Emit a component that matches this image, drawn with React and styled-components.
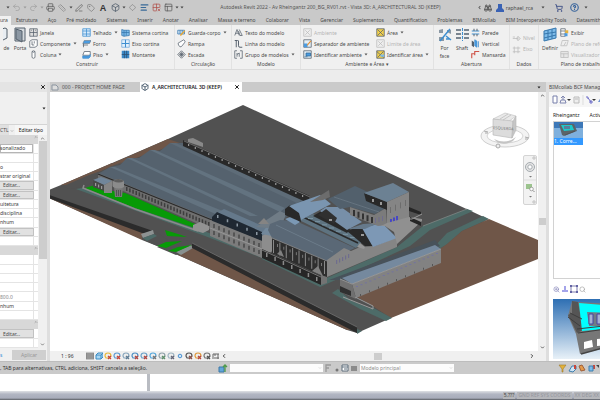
import React from 'react';
import styled, { createGlobalStyle } from 'styled-components';
import {
  Undo2,
  Redo2,
  Printer,
  Ruler,
  PenLine,
  Tag,
  Box,
  Diamond,
  AlignLeft,
  Grid2x2X,
  PanelsTopLeft,
  Binoculars,
  ShoppingCart,
  CircleHelp,
  ChevronDown,
  ChevronUp,
  ChevronLeft,
  ChevronRight,
  X,
  ZoomIn,
  Search
} from 'lucide-react';

const GlobalStyle = createGlobalStyle`
  * {
    box-sizing: border-box;
  }

  body {
    margin: 0;
    background: #ececec;
    color: #4a4a4a;
    font: 5px/8px "Noto Sans", "Open Sans", sans-serif;
    overflow: hidden;
  }

  button, select, input {
    font: inherit;
    color: inherit;
    margin: 0;
    padding: 0;
    border: 0;
    border-radius: 0;
    background: none;
    appearance: none;
  }

  svg {
    display: block;
    flex: none;
  }
`;

const Shell = styled.div`
  min-height: 100vh;
  display: flex;
  flex-direction: column;
`;

/* title bar and ribbon */

const TitleBar = styled.header`
  display: flex;
  align-items: center;
  height: 16px;
  padding: 0 12px 2px 5px;
  background: #c9c9c9;
`;

const TitleTools = styled.div`
  display: flex;
  align-items: center;
  white-space: nowrap;
  padding-top: 1px;
`;

const ToolButton = styled.button`
  display: flex;
  align-items: center;
  justify-content: center;
  width: ${props => props.$width || 12}px;
  height: 12px;
  color: ${props => props.$color || '#5a5a5a'};
`;

const Letter = styled.b`
  font: bold 9px/10px "Liberation Sans", sans-serif;
  color: #333;
`;

const Title = styled.h1`
  flex: 1;
  min-width: 0;
  margin: 0;
  font-size: 5px;
  font-weight: 400;
  text-align: center;
  white-space: nowrap;
  color: #555;
`;

const Tabs = styled.nav`
  display: flex;
  height: 9px;
  background: #c9c9c9;
  overflow: hidden;
`;

const RibbonTab = styled.button`
  flex: none;
  height: 9px;
  padding: ${props => (props.$active ? '0 3px 0 0' : '0 5px')};
  background: ${props => (props.$active ? '#f0f0f0' : 'none')};
  white-space: nowrap;
  line-height: 9px;
`;

const Ribbon = styled.div`
  display: flex;
  height: 45px;
  background: #f0f0f0;
  border-bottom: 1px solid #dcdcdc;
  overflow: hidden;
`;

const RibbonPanel = styled.section`
  flex: none;
  width: ${props => props.$width}px;
  display: flex;
  flex-direction: column;
  border-right: 1px solid #e2e2e2;
`;

const PanelTools = styled.div`
  display: flex;
  padding-left: ${props => props.$inset || 2}px;
  height: 35px;
`;

const PanelName = styled.div`
  text-align: center;
  white-space: nowrap;
  line-height: 9px;
`;

const ToolColumn = styled.div`
  flex: none;
  width: ${props => props.$width}px;
  display: flex;
  flex-direction: column;
  justify-content: ${props => (props.$centered ? 'center' : 'flex-start')};
  padding-top: 2px;
`;

const RibbonItem = styled.button`
  display: flex;
  align-items: center;
  gap: 2px;
  height: 11px;
  white-space: nowrap;
  color: ${props => (props.disabled ? '#b4b4b4' : '#4a4a4a')};
`;

const BigItem = styled.button`
  flex: none;
  width: ${props => props.$width}px;
  display: flex;
  flex-direction: column;
  align-items: center;
  gap: 1px;
  padding-top: 2px;
  line-height: 8px;
`;

const RibbonFoot = styled.div`
  height: 12px;
  background: #ececec;
`;

/* workspace */

const Workspace = styled.main`
  flex: 1;
  display: grid;
  grid-template-columns: 47px 1fr 51px;
  column-gap: 3px;
  background: #dedede;
  min-height: 279px;
`;

const Palette = styled.aside`
  display: flex;
  flex-direction: column;
  background: #f0f0f0;
  overflow: hidden;
  min-width: 0;
`;

const PaletteHead = styled.div`
  display: flex;
  align-items: center;
  justify-content: flex-end;
  height: 10px;
  padding-right: 1px;
  background: #e4e4e4;
`;

const TypePicker = styled.div`
  display: flex;
  align-items: center;
  justify-content: flex-end;
  height: 33px;
  border-bottom: 1px solid #d4d4d4;
`;

const TypeRow = styled.div`
  display: flex;
  height: 10px;
  white-space: nowrap;
`;

const TypeSelect = styled.select`
  width: 9px;
  background: #e0e0e0;
`;

const EditType = styled.button`
  flex: 1;
  background: #f6f6f6;
  white-space: nowrap;
  color: #222;
`;

const PropsBody = styled.div`
  flex: 1;
  display: grid;
  grid-template-columns: 1fr 9px;
`;

const PropList = styled.div`
  display: grid;
  grid-auto-rows: 1fr;
  background: #fff;
`;

const Section = styled.div`
  display: flex;
  justify-content: flex-end;
  background: #d8d8d8;
`;

const PropRow = styled.div`
  display: flex;
  border-bottom: 1px solid #e4e4e4;
  padding-right: 4px;
  white-space: nowrap;
  overflow: hidden;
`;

const PropValue = styled.input`
  width: 100%;
  min-width: 0;
  color: ${props => (props.$muted ? '#888' : '#3a3a3a')};
  border-right: 1px solid #e4e4e4;
  box-shadow: ${props => (props.$boxed ? 'inset 0 0 0 1px #b5b5b5' : 'none')};
`;

const EditButton = styled.button`
  width: 100%;
  background: #e1e1e1;
  border: 1px solid #c2c2c2;
  border-left: 0;
  line-height: 6px;
  padding-right: 10px;
`;

const ScrollTrack = styled.div`
  display: flex;
  flex-direction: column;
  justify-content: space-between;
  align-items: center;
  background: #f0f0f0;
  padding: 1px 0;
`;

const Thumb = styled.span`
  display: block;
  width: ${props => props.$width}px;
  height: ${props => props.$height}px;
  background: #cdcdcd;
`;

const PaletteFoot = styled.div`
  display: flex;
  align-items: center;
  justify-content: space-between;
  height: 13px;
  padding-right: 1px;

  a {
    color: #3a8ed8;
    text-decoration: none;
  }
`;

const ApplyButton = styled.button`
  width: 34px;
  height: 10px;
  background: #cfcfcf;
  color: #969696;
`;

const View = styled.section`
  display: flex;
  flex-direction: column;
  min-width: 0;
  background: #fff;
`;

const ViewTabs = styled.div`
  display: flex;
  height: 10px;
  background: #cacaca;
  padding-right: 5px;
  align-items: center;
`;

const ViewTab = styled.button`
  display: flex;
  align-items: center;
  gap: 3px;
  height: 10px;
  width: ${props => props.$width}px;
  padding: 0 2px 0 1px;
  white-space: nowrap;
  background: ${props => (props.$active ? '#fff' : '#cacaca')};
  color: ${props => (props.$active ? '#222' : '#555')};
  font-weight: ${props => (props.$active ? 600 : 400)};

  span {
    flex: 1;
    text-align: left;
  }
`;

const Spacer = styled.span`
  flex: 1;
`;

const CanvasRow = styled.div`
  flex: 1;
  display: grid;
  grid-template-columns: 1fr 8px;
`;

const Canvas = styled.div`
  position: relative;
  overflow: hidden;

  > svg {
    width: 100%;
    height: 100%;
  }
`;

const ViewCube = styled.div`
  position: absolute;
  top: 20px;
  right: 8px;
`;

const NavBar = styled.div`
  position: absolute;
  top: 63px;
  right: 1px;
  width: 14px;
  height: 50px;
  border: 1px solid #d4d4d4;
  border-radius: 2px;
  background: #f2f2f2;
`;

const ViewBar = styled.div`
  display: flex;
  align-items: center;
  height: 10px;
  padding: 0 11px;
  background: #f0f0f0;
`;

const Scale = styled.span`
  width: 25px;
  color: #333;
`;

const ViewIcons = styled.div`
  display: flex;
  gap: 1px;
  align-items: center;
`;

const BcfPanel = styled.aside`
  display: flex;
  flex-direction: column;
  min-width: 0;
  overflow: hidden;
  background: #fff;
  white-space: nowrap;
`;

const BcfTitle = styled.div`
  height: 10px;
  line-height: 10px;
  background: #dcdcdc;
`;

const BcfTools = styled.div`
  display: flex;
  align-items: center;
  gap: 2px;
  height: 15px;
  padding-left: 3px;
  background: #f6f6f6;
`;

const BcfTabs = styled.div`
  display: flex;
  gap: 10px;
  height: 14px;
  padding: 4px 4px;
  color: #222;
`;

const IssueList = styled.div`
  flex: 1;
  margin-left: 4px;
  border: 1px solid #d2d2d2;
  border-right: 0;
`;

const Issue = styled.button`
  display: block;
  width: 29px;
  background: #3399ff;
  color: #fff;
  text-align: left;
  line-height: 7px;
`;

const SnapTools = styled.div`
  display: flex;
  align-items: center;
  gap: 1px;
  height: 20px;
  padding-left: 4px;
`;

const Preview = styled.div`
  height: 60px;
  margin: 0 0 2px 4px;
  overflow: hidden;
`;

/* bottom */

const StatusBar = styled.footer`
  display: flex;
  align-items: center;
  height: 13px;
  background: #cacaca;
  border-top: 1px solid #bdbdbd;
  padding-right: 1px;
  white-space: nowrap;
`;

const StatusText = styled.span`
  width: 218px;
  color: #333;
`;

const SelectWrap = styled.label`
  display: flex;
  align-items: center;
  height: 8px;
  width: ${props => props.$width}px;
  padding: 0 1px;
  margin: 0 2px;
  background: #fcfcfc;
  color: #aaa;

  select {
    flex: 1;
    min-width: 0;
    color: #8c8c8c;
  }
`;

const Tray = styled.div`
  display: grid;
  grid-template-columns: 150px 1fr;
  height: 17px;
  background: #fff;

  span {
    border-right: 3px solid #b9bcc2;
  }

  span + span {
    border-right: 0;
  }
`;

const HostBar = styled.div`
  display: flex;
  justify-content: flex-end;
  gap: 2px;
  height: 9px;
  overflow: hidden;
  white-space: nowrap;
  line-height: 7px;
  padding-top: 1px;
  background: linear-gradient(#dfe1e5, #b1b5c2 35%, #a8acba 80%, #6e7179 90%);
  color: #93959d;

  span {
    background: #b5b6ba;
    height: 7px;
    padding: 0 1px;
  }

  span:first-child {
    color: #444;
  }
`;

const Arrow = ({ color = '#444' }) => (
  <svg width="4" height="3" viewBox="0 0 4 3">
    <path d="M0.5 0.5h3L2 2.5z" fill={color} />
  </svg>
);

const blue = '#3f8fd0';
const dark = '#55606c';

// 12x12 drawings used by the small ribbon buttons
const glyphs = {
  window: <path d="M1 1h10v10H1zM6 1v10M1 6h10M3 3h1M8 3h1" fill="#ddd" stroke={dark} />,
  component: <path d="M1 3l3-2h7v8l-3 2H1zM4 3v5h3M7 3v3" fill="#fff" stroke={dark} />,
  column: <path d="M4 2q2-2 4 0v8q-2 2-4 0zM4 2q2 2 4 0" fill="#fff" stroke={dark} />,
  roof: (
    <g>
      <path d="M1 1h10v10H1z" fill="#d8ebfa" stroke={blue} />
      <path d="M6 1v10M1 4h10M1 8h10" stroke={blue} />
    </g>
  ),
  ceiling: (
    <g>
      <path d="M3 2h9l-2 4H1z" fill="#4a9be0" stroke={dark} strokeWidth=".6" />
      <path d="M2 6v5M1 8h7" stroke={dark} />
    </g>
  ),
  floor: (
    <g>
      <path d="M3 2h8v5H1z" fill="#fff" stroke={dark} />
      <path d="M1 8h8l2-2v3L9 11H1z" fill="#4a9be0" stroke={blue} />
    </g>
  ),
  curtain: (
    <g>
      <path d="M1 2l3 1h7v7l-7 1-3-1z" fill="#7dbbe9" stroke="#3677ad" />
      <path d="M4 3v8M7 3v7M1 6h10" stroke="#3677ad" />
    </g>
  ),
  axis: (
    <g>
      <path d="M1 1h10v10H1z" fill="#e4f1fc" stroke="#6da6d8" />
      <path d="M6 1v10M1 6h10" stroke={blue} strokeWidth="1.4" />
    </g>
  ),
  mullion: (
    <g>
      <path d="M1 1h10v10H1z" fill="#3c8ac9" />
      <path d="M4.500 1v10M7.500 1v10M1 6h10" stroke="#2c4f70" />
    </g>
  ),
  rail: (
    <g>
      <path d="M1 3h9v5H1zM4 3v5M7 3v5" fill="#cfe4f5" stroke="#3677ad" />
      <path d="M4 9l6-6 1 1-6 7z" fill="#e6a532" />
    </g>
  ),
  ramp: <path d="M2 8q-2-3 2-4l5-3q3 2 1 4l-4 5q-2 2-4-2z" fill="#fff" stroke={dark} />,
  stair: <path d="M1 6l5-5 5 5-5 5zM3 6h6M6 3v6M4 4l4 4M8 4l-4 4" fill="#ddd" stroke={dark} />,
  text: <path d="M1 10l3-8 3 8M2 7h4M7 2l4 8H8M6 4l2 6" fill="none" stroke={dark} />,
  line: <path d="M1 2h4M3 2v9M6 2v7q0 2 2 2h3" fill="none" stroke={dark} strokeWidth="1.300" />,
  group: <path d="M4 1H1v10h3M8 1h3v10H8M4 4v5M4 6l3-2v5" fill="none" stroke={dark} />,
  room: <path d="M1 1h10v10H1zM3 3l6 6M9 3l-6 6" fill="#eee" stroke="#bbb" />,
  separator: (
    <g>
      <path d="M1 1h10v10H1z" fill="#e3eef6" stroke={dark} />
      <path d="M1 6h5v5H1z" fill="#4a9be0" />
      <path d="M5 8l5-6 1 1-5 6z" fill="#e58b2a" />
    </g>
  ),
  tagroom: (
    <g>
      <path d="M1 1h10v10H1z" fill="#e3eef6" stroke={dark} />
      <path d="M4 4h6v4H4zM2 9h4" fill="#4a9be0" stroke="#2f6594" />
    </g>
  ),
  area: (
    <g>
      <path d="M1 1h10v10H1z" fill="#f1cf4c" stroke={dark} />
      <path d="M2 2l8 8M10 2l-8 8" stroke={dark} />
    </g>
  ),
  areatag: (
    <g>
      <path d="M1 1h10v10H1z" fill="#f1cf4c" stroke={dark} />
      <path d="M1 2l9 8M10 2l-8 8" stroke={dark} />
      <path d="M6 6h5v3H6z" fill="#7dbbe9" />
    </g>
  ),
  wall: (
    <g>
      <path d="M1 4h10M1 8h10" stroke={blue} strokeWidth="1.500" />
      <path d="M4 1v3M8 1v3M4 8v3M8 8v3" stroke={dark} strokeWidth="1.300" />
    </g>
  ),
  vertical: (
    <g>
      <path d="M1 2v7l3 2V4z" fill={dark} />
      <path d="M5 1v8l3 2V3zM10 3v8" fill="#4a9be0" stroke={blue} />
    </g>
  ),
  dormer: <path d="M1 11V5h4V2h6M5 5v2" fill="none" stroke="#cf5348" strokeWidth="1.500" />,
  level: <path d="M1 6h7M8 3l3 3-3 3-2-3zM1 4h3" fill="#ddd" stroke="#bbb" />,
  grid: <path d="M3 2v9M8 2v9M1 4h10M1 9h10" fill="none" stroke="#bbb" />,
  show: (
    <g>
      <path d="M1 1h6v10H1zM1 4h6M1 8h6" fill="#fff" stroke={dark} />
      <path d="M7 3h4v4H7z" fill="#e6b33c" />
      <path d="M6 7h4v4H6z" fill="#4a9be0" />
    </g>
  ),
  plane: <path d="M3 2h8l-2 7H1zM5 9l3-5" fill="#eee" stroke="#bbb" />,
  viewer: <path d="M1 2h10v8H1zM1 5h10M5 5v5" fill="#e6e6e6" stroke="#bbb" />
};

const Glyph = ({ name, size = 9 }) => (
  <svg width={size} height={size} viewBox="0 0 12 12">
    {glyphs[name]}
  </svg>
);

const Item = ({ icon, text, menu, disabled }) => (
  <RibbonItem disabled={disabled}>
    <Glyph name={icon} />
    <span>{text}</span>
    {menu && <Arrow color={disabled ? '#bbb' : '#555'} />}
  </RibbonItem>
);

const ribbonTabs = [
  'Estrutura',
  'Aço',
  'Pré moldado',
  'Sistemas',
  'Inserir',
  'Anotar',
  'Analisar',
  'Massa e terreno',
  'Colaborar',
  'Vista',
  'Gerenciar',
  'Suplementos',
  'Quantification',
  'Problemas',
  'BIMcollab',
  'BIM Interoperability Tools',
  'Datasmith'
];

const RibbonArea = () => (
  <Ribbon>
    <RibbonPanel $width={175}>
      <PanelTools $inset={0}>
        <BigItem $width={9}>
          <svg width="8" height="16" viewBox="0 0 8 16">
            <path d="M-4 3l6-2 2 1v9l-6 3z" fill="#e8edf2" stroke={dark} />
          </svg>
          de
        </BigItem>
        <BigItem $width={18}>
          <svg width="12" height="16" viewBox="0 0 12 16">
            <path d="M1 1h10v13H1z" fill="#d5dade" stroke={dark} />
            <path d="M2 2l6 2v11l-6-3z" fill="#8c98a4" stroke={dark} />
          </svg>
          Porta
        </BigItem>
        <ToolColumn $width={53}>
          <Item icon="window" text="Janela" />
          <Item icon="component" text="Componente" menu />
          <Item icon="column" text="Coluna" menu />
        </ToolColumn>
        <ToolColumn $width={39}>
          <Item icon="roof" text="Telhado" menu />
          <Item icon="ceiling" text="Forro" />
          <Item icon="floor" text="Piso" menu />
        </ToolColumn>
        <ToolColumn $width={50}>
          <Item icon="curtain" text="Sistema cortina" />
          <Item icon="axis" text="Eixo cortina" />
          <Item icon="mullion" text="Montante" />
        </ToolColumn>
      </PanelTools>
      <PanelName>Construir</PanelName>
    </RibbonPanel>
    <RibbonPanel $width={57}>
      <PanelTools>
        <ToolColumn $width={54}>
          <Item icon="rail" text="Guarda-corpo" menu />
          <Item icon="ramp" text="Rampa" />
          <Item icon="stair" text="Escada" />
        </ToolColumn>
      </PanelTools>
      <PanelName>Circulação</PanelName>
    </RibbonPanel>
    <RibbonPanel $width={69}>
      <PanelTools>
        <ToolColumn $width={66}>
          <Item icon="text" text="Texto do modelo" />
          <Item icon="line" text="Linha do modelo" />
          <Item icon="group" text="Grupo de modelos" menu />
        </ToolColumn>
      </PanelTools>
      <PanelName>Modelo</PanelName>
    </RibbonPanel>
    <RibbonPanel $width={133}>
      <PanelTools>
        <ToolColumn $width={73}>
          <Item icon="room" text="Ambiente" disabled />
          <Item icon="separator" text="Separador de ambiente" />
          <Item icon="tagroom" text="Identificar ambiente" menu />
        </ToolColumn>
        <ToolColumn $width={57}>
          <Item icon="area" text="Área" menu />
          <Item icon="room" text="Limite de área" disabled />
          <Item icon="areatag" text="Identificar área" menu />
        </ToolColumn>
      </PanelTools>
      <PanelName>Ambiente e Área ▾</PanelName>
    </RibbonPanel>
    <RibbonPanel $width={76}>
      <PanelTools>
        <BigItem $width={17}>
          <svg width="14" height="16" viewBox="0 0 14 16">
            <path d="M1 3l4-1v4H1zM9 3h4v4l-4-2zM1 10h5v4H1z" fill="#8b98a4" />
            <path d="M2 14L12 2M8 9l5 4M8 12h4" stroke={blue} strokeWidth="1.500" />
          </svg>
          Por face
        </BigItem>
        <BigItem $width={18}>
          <svg width="15" height="16" viewBox="0 0 15 16">
            <path d="M1 3h5M9 3h5M1 7h5M9 7h5M1 11h5M9 11h5" stroke="#7a8590" strokeWidth="2" />
            <path d="M7.500 1v13" stroke={blue} strokeDasharray="3 1" />
          </svg>
          Shaft
        </BigItem>
        <ToolColumn $width={38}>
          <Item icon="wall" text="Parede" />
          <Item icon="vertical" text="Vertical" />
          <Item icon="dormer" text="Mansarda" />
        </ToolColumn>
      </PanelTools>
      <PanelName>Abertura</PanelName>
    </RibbonPanel>
    <RibbonPanel $width={29}>
      <PanelTools>
        <ToolColumn $width={26} $centered>
          <Item icon="level" text="Nível" disabled />
          <Item icon="grid" text="Eixo" disabled />
        </ToolColumn>
      </PanelTools>
      <PanelName>Dados</PanelName>
    </RibbonPanel>
    <RibbonPanel $width={86}>
      <PanelTools $inset={1}>
        <BigItem $width={20}>
          <svg width="14" height="16" viewBox="0 0 14 16">
            <path d="M1 4l12-3v10L1 14z" fill="#7dbbe9" stroke="#3677ad" />
            <path d="M5 3v10M9 2v10M1 7l12-2M1 11l12-3" stroke="#3677ad" />
          </svg>
          Definir
        </BigItem>
        <ToolColumn $width={62}>
          <Item icon="show" text="Exibir" />
          <Item icon="plane" text="Plano de referência" disabled />
          <Item icon="viewer" text="Visualizador" disabled />
        </ToolColumn>
      </PanelTools>
      <PanelName>Plano de trabalho</PanelName>
    </RibbonPanel>
  </Ribbon>
);

const propRows = [
  { type: 'section' },
  { type: 'value', text: 'sonalizado', boxed: true },
  { type: 'value', text: '' },
  { type: 'value', text: 'o' },
  { type: 'value', text: 'strar original' },
  { type: 'edit' },
  { type: 'edit' },
  { type: 'value', text: 'uitetura' },
  { type: 'value', text: 'disciplina' },
  { type: 'value', text: 'nhum' },
  { type: 'edit' },
  { type: 'value', text: '' },
  { type: 'section' },
  { type: 'value', text: '' },
  { type: 'value', text: '' },
  { type: 'value', text: '' },
  { type: 'value', text: '' },
  { type: 'value', text: '800.0', muted: true },
  { type: 'value', text: 'nhum' },
  { type: 'value', text: '' },
  { type: 'section' },
  { type: 'edit' },
  { type: 'value', text: '' }
];

const Properties = () => (
  <Palette>
    <PaletteHead>
      <ToolButton $width={7} $color="#222" aria-label="Fechar">
        <X size={6} strokeWidth={4} />
      </ToolButton>
    </PaletteHead>
    <TypePicker>
      <ToolButton $width={7} aria-label="Tipo">
        <Arrow color="#222" />
      </ToolButton>
    </TypePicker>
    <TypeRow>
      <TypeSelect aria-label="Vista">
        <option>CTL</option>
      </TypeSelect>
      <ToolButton $width={6} aria-label="Abrir lista">
        <ChevronDown size={4} />
      </ToolButton>
      <EditType>Editar tipo</EditType>
    </TypeRow>
    <PropsBody>
      <PropList>
        {propRows.map((row, i) => {
          if (row.type === 'section') {
            return (
              <Section key={i}>
                <ChevronUp size={4} />
              </Section>
            );
          }
          return (
            <PropRow key={i}>
              {row.type === 'edit' ? (
                <EditButton>Editar...</EditButton>
              ) : (
                <PropValue
                  aria-label={`Propriedade ${i}`}
                  defaultValue={row.text}
                  $boxed={row.boxed}
                  $muted={row.muted}
                />
              )}
            </PropRow>
          );
        })}
      </PropList>
      <ScrollTrack>
        <ChevronUp size={5} strokeWidth={3} />
        <Thumb $width={8} $height={118} />
        <Spacer />
        <ChevronDown size={5} strokeWidth={3} />
      </ScrollTrack>
    </PropsBody>
    <PaletteFoot>
      <a href="#ajuda">s</a>
      <ApplyButton>Aplicar</ApplyButton>
    </PaletteFoot>
  </Palette>
);

// small rects spread along a slanted facade
const Openings = ({ from, to, count, w = 1, h = 2, fill = '#222' }) =>
  Array.from({ length: count }, (_, i) => {
    const t = count > 1 ? i / (count - 1) : 0;
    return (
      <rect
        key={i}
        x={from[0] + (to[0] - from[0]) * t}
        y={from[1] + (to[1] - from[1]) * t}
        width={w}
        height={h}
        fill={fill}
      />
    );
  });

const Scene = () => (
  <svg viewBox="50 92 488 259" preserveAspectRatio="xMidYMid slice" role="img" aria-label="Vista 3D">
    {/* ground */}
    <polygon points="49,190 61,185 168,139 243,105 488,219 441,250 391,318 357,333 347,330 49,198" fill="#515151" />
    <polygon points="61,186 168,139 180,143 127,161 98,172 76,186" fill="#6f5648" />
    <polygon points="84,180 112,166 122,162 104,174" fill="#545454" />
    <polygon points="61,186 80,178 98,172 98,180 85,186 70,189" fill="#515151" />
    <polygon points="61,185 112,163 112,165 66,185" fill="#6f5648" />
    <polygon points="49,198 153,234 142,240" fill="#6f5648" />
    <polygon points="178,255 193,246 357,329 347,330" fill="#6f5648" />
    <polygon points="49,195 153,231 153,234 142,233 49,198" fill="#2b2b2b" />
    <polygon points="142,235 142,240 157,246 168,240 153,230" fill="#515151" />
    <polygon points="141,234 153,230 154,234 143,238" fill="#8d9292" />
    <polygon points="143,238 154,234 157,236 147,241" fill="#4d6b68" />
    <polygon points="157,247 176,255 196,246 182,238" fill="#515151" />
    <polygon points="176,252 191,245 193,248 181,255" fill="#88908f" />
    <polygon points="192,243 357,327 357,333 192,248" fill="#2b2b2b" />
    <polyline points="192,243 357,327" stroke="#777" strokeWidth=".7" fill="none" />
    <polygon points="357,329 362,331 357,334" fill="#4d6b68" />
    <polygon points="165,230 178,234 187,237 167,236" fill="#079a07" />
    <polygon points="157,246 166,242 182,241 166,248" fill="#079a07" />
    <polygon points="168,251 178,247 192,245 176,252" fill="#079a07" />

    {/* sidewalks on the right and bare soil */}
    <polygon points="262,259 262,255 320,281 397,247 423,226 467,209 473,211 430,230 410,246 380,260 320,287" fill="#4d6b68" />
    <polygon points="435,246 447,233 483,216 489,219 462,231 446,245 441,248" fill="#4d6b68" />
    <polygon points="357,297 441,262 441,248 447,244 462,231 489,219 538,240 538,259 391,318 371,305" fill="#6f5648" />
    <polygon points="332,293 338,289 392,318 386,321 360,309" fill="#4d6b68" />
    <polygon points="338,289 357,297 371,306 371,309 350,300" fill="#515151" />
    <polygon points="329,280 435,240 440,246 342,280" fill="#48525a" />

    {/* lawn and fence */}
    <polygon points="76,189 82,188 212,234 262,253 262,258 205,236" fill="#4d6b68" />
    <polygon points="85,188 95,185 112,191 125,193 195,224 198,229 135,208" fill="#079a07" />
    <polyline points="84,185 83,188 135,209 198,231" stroke="#8b8b8b" strokeWidth="1.500" fill="none" />

    {/* long sheds */}
    <polygon points="98,174 110,167 120,165 127,158 139,158 150,150 160,151 170,143 183,143 310,201 285,218 267,228 225,212 212,222" fill="#55626e" />
    <polygon points="110,167 115,167 225,212 220,216" fill="#637380" />
    <polygon points="127,158 132,158 258,216 250,216" fill="#637380" />
    <polygon points="150,150 155,150 285,208 280,212" fill="#637380" />
    <polygon points="170,143 176,143 302,200 297,203" fill="#5e6c78" />
    <polygon points="183,140 310,196 308,203 183,146" fill="#292929" />
    <polyline points="184,141 310,197" stroke="#7b7b7b" strokeWidth=".8" fill="none" />
    <Openings from={[188, 144]} to={[302, 195]} count={18} w={1.2} h={2} fill="#999" />
    <polygon points="188,139 193,138 203,143 203,147 188,142" fill="#898989" />
    <polygon points="98,173 212,219 212,230 98,180" fill="#6f6f6f" />
    <polyline points="98,174 212,220" stroke="#292929" strokeWidth="1.200" fill="none" />
    <Openings from={[126, 187]} to={[208, 222]} count={27} w={1.500} h={4} fill="#3d3d3d" />
    <polygon points="93,180 101,177 112,181 104,185" fill="#71869a" />
    <polygon points="93,180 104,185 104,191 93,187" fill="#484848" />
    <polygon points="104,185 112,181 112,193 104,193" fill="#858585" />
    <Openings from={[95, 183]} to={[101, 186]} count={3} w={1.2} h={3} fill="#999" />
    <polygon points="114,187 123,187 122,197 115,197" fill="#777" />
    <path d="M113 181q5-4 11 0v6q-5 3-11 0z" fill="#8b8b8b" />
    <path d="M113 181q5-4 11 0q-5 3-11 0z" fill="#5d5d5d" />
    <Openings from={[116, 190]} to={[120, 190]} count={3} w={1} h={6} fill="#525252" />
    <polygon points="193,225 200,222 209,226 209,230 203,233 193,230" fill="#929292" />

    {/* main facade */}
    <polygon points="217,213 224,209 272,230 262,236" fill="#65798b" />
    <polygon points="212,217 217,212 262,232 262,241 212,222" fill="#1f2832" />
    <polygon points="210,220 262,241 262,258 210,236" fill="#7c7c7c" />
    <polygon points="262,236 272,229 274,250 262,258" fill="#8d8d8d" />
    <polygon points="261,234 268,225 273,230 272,236" fill="#73889b" />
    <Openings from={[213, 224]} to={[258, 243]} count={10} w={2} h={4} fill="#555" />
    <Openings from={[213, 231]} to={[258, 250]} count={10} w={2} h={4} fill="#555" />
    <Openings from={[217, 215]} to={[256, 232]} count={5} w={1.5} h={3} fill="#8b97a2" />
    <polyline points="210,228 262,249" stroke="#a0a0a0" strokeWidth=".7" fill="none" />

    {/* second block */}
    <polygon points="256,227 280,211 286,214 283,222 268,228" fill="#707c86" />
    <polygon points="258,224 264,218 269,224" fill="#858483" />
    <polygon points="272,237 327,259 327,278 272,253" fill="#2e2e2e" />
    <polygon points="268,230 270,224 280,220 296,221 355,248 327,261 272,238" fill="#5a6876" />
    <polygon points="285,219 293,216 300,222 295,225" fill="#7b98b4" />
    <polyline points="276,225 333,252" stroke="#6b7b89" fill="none" />
    <polyline points="272,238 327,261" stroke="#8d8d8d" strokeWidth=".8" fill="none" />
    <Openings from={[273, 240]} to={[324, 261]} count={9} w={1} h={13} fill="#8a8a8a" />
    <Openings from={[277, 244]} to={[321, 263]} count={8} w={1} h={3} fill="#777" />
    <polygon points="262,249 321,276 321,285 262,258" fill="#262626" />
    <polyline points="262,250 321,277" stroke="#8a8a8a" strokeWidth=".8" fill="none" />
    <Openings from={[266, 253]} to={[316, 277]} count={7} w={1.5} h={4} fill="#8a8a8a" />
    <polygon points="321,275 327,277 327,283 321,285" fill="#737373" />
    <polygon points="327,260 344,248 351,251 360,247 375,246 397,237 397,247 327,277" fill="#858585" />
    <Openings from={[336, 260]} to={[348, 254]} count={5} w={1.2} h={4} fill="#6f6d8e" />
    <polygon points="277,254 281,250 284,257" fill="#808080" />
    <polygon points="312,271 318,266 323,276" fill="#808080" />

    {/* skylights and gables */}
    <polygon points="299,220 313,214 364,240 356,248" fill="#5e7380" />
    <polyline points="303,217 358,243" stroke="#292929" strokeWidth="1.500" fill="none" />
    <Openings from={[308, 218]} to={[350, 237]} count={7} w={5} h={1} fill="#7893a2" />
    <polygon points="285,209 290,205 300,213 301,222 285,215" fill="#292929" />
    <polygon points="289,206 320,195 331,204 301,220 299,213" fill="#7a95b0" />
    <polygon points="310,202 329,190 330,197 323,200" fill="#6c6c6c" />
    <polygon points="313,216 325,209 350,229 347,233" fill="#292929" />
    <polygon points="320,211 326,207 341,207 362,222 347,230" fill="#778fa8" />
    <polygon points="318,215 326,209 337,218 334,224" fill="#303030" />
    <polygon points="347,231 361,226 373,246 365,246" fill="#292929" />
    <polygon points="362,228 382,223 397,238 373,247" fill="#7d98b5" />
    <polygon points="348,229 363,224 378,223 365,229" fill="#66798a" />
    <Openings from={[329, 219]} to={[329, 219]} count={1} w={3} h={2} fill="#999" />
    <Openings from={[361, 234]} to={[361, 234]} count={1} w={3} h={2} fill="#999" />
    <polygon points="357,247 360,243 365,247 364,249" fill="#969696" />

    {/* rear buildings */}
    <polygon points="328,199 355,186 368,192 386,208 375,214 350,207 340,209" fill="#52606c" />
    <polyline points="334,197 379,212" stroke="#65737f" fill="none" />
    <polygon points="350,207 374,215 386,208 387,225 378,226 350,215" fill="#7b7b7b" />
    <Openings from={[353, 210]} to={[371, 217]} count={5} w={2} h={6} fill="#333" />
    <Openings from={[375, 218]} to={[382, 216]} count={3} w={1} h={5} fill="#6f6d8e" />
    <polygon points="364,193 387,202 387,210 366,201" fill="#292929" />
    <polygon points="364,193 393,183 409,192 387,202" fill="#6c8193" />
    <polygon points="387,202 409,192 409,218 387,226" fill="#858585" />
    <Openings from={[372, 199]} to={[380, 202]} count={2} w={2} h={3} fill="#999" />
    <Openings from={[390, 207]} to={[405, 200]} count={4} w={1} h={6} fill="#6d6d6d" />
    <Openings from={[390, 219]} to={[396, 216]} count={3} w={2} h={5} fill="#4848c4" />
    <polygon points="381,226 387,223 409,217 422,219 422,221 397,244 394,232 385,226" fill="#909090" />
    <polygon points="409,207 421,212 421,215 409,211" fill="#262626" />
    <polygon points="410,217 421,222 421,226 410,221" fill="#262626" />
    <polyline points="409,219 412,219 422,214" stroke="#999" fill="none" />
    <polyline points="423,226 467,209" stroke="#7f8685" strokeWidth=".8" fill="none" />

    {/* long building in front */}
    <polygon points="342,278 435,245 441,249 352,284" fill="#75899e" />
    <polygon points="352,284 441,249 441,263 356,298" fill="#828282" />
    <polygon points="340,279 352,284 356,299 340,292" fill="#707070" />
    <polygon points="340,286 351,291 351,296 340,292" fill="#303030" />
    <polyline points="340,279 352,284 441,249" stroke="#a0a0a0" strokeWidth=".8" fill="none" />
    <Openings from={[356, 286]} to={[436, 253]} count={19} w={2} h={1} fill="#7373a0" />
    <Openings from={[360, 294]} to={[432, 264]} count={9} w={1} h={2} fill="#555" />
    <polyline points="343,297 373,309 373,306 355,297" stroke="#9b9b9b" fill="none" />
  </svg>
);

const viewIconColors = [
  ['#777', '#999'],
  ['#54a7dc', '#3f7fae'],
  ['#e8b93a', '#c8463a'],
  ['#5d9bd0', '#c8463a'],
  ['#8aa7bd', '#5f7b92'],
  ['#4f8fc4', '#b5473f'],
  ['#6aa0c8', '#b5473f'],
  ['#54a7dc', '#777'],
  ['#8fa0a8', '#5f8f6a'],
  ['#9fb5c2', '#667'],
  ['#58a0dd', '#58a0dd'],
  ['#555', '#8d5048'],
  ['#e0983a', '#b5473f'],
  ['#777', '#555'],
  ['#666', '#888']
];

const BarIcon = ({ colors, i }) => (
  <svg width="8" height="8" viewBox="0 0 8 8">
    {i === 0 && <path d="M0 1h8v6H0zM0 3h8M0 5h8" fill="#aaa" stroke="#777" strokeWidth=".7" />}
    {i === 1 && <path d="M1 3l2-2h5v4L6 7H1zM1 3h5l2-2M6 3v4" fill="#a9d7f4" stroke="#3a8cc4" />}
    {i === 10 && <circle cx="4" cy="4" r="1.800" fill="#cfe6fa" stroke="#4a90d0" />}
    {i === 14 && <path d="M1 7V2h6M3 2v2M6 2v5M2 6h5" fill="none" stroke="#666" />}
    {i > 1 && i !== 10 && i !== 14 && (
      <g>
        <path d="M1 4q0-3 3-3t3 3L5 6H2z" fill="#eee" stroke={colors[0]} strokeWidth="1.200" />
        <path d="M4 4l3 3M7 4L4 7" stroke={colors[1]} strokeWidth="1.300" />
      </g>
    )}
  </svg>
);

const ModelView = () => (
  <View>
    <ViewTabs>
      <ViewTab $width={90}>
        <svg width="8" height="7" viewBox="0 0 8 7">
          <path d="M1 1h4l2 2v3H1z" fill="#ddd" stroke="#8b95a0" />
        </svg>
        <span>000 - PROJECT HOME PAGE</span>
      </ViewTab>
      <ViewTab $width={102} $active>
        <Box size={8} strokeWidth={3} color="#556677" />
        <span>A_ARCHITECTURAL 3D (KEEP)</span>
        <X size={6} strokeWidth={4} />
      </ViewTab>
      <Spacer />
      <Arrow color="#222" />
    </ViewTabs>
    <CanvasRow>
      <Canvas>
        <Scene />
        <ViewCube>
          <svg width="50" height="38" viewBox="0 0 50 38">
            <ellipse cx="25" cy="24" rx="24" ry="11" fill="#f3f3f3" stroke="#cfcfcf" />
            <ellipse cx="25" cy="24" rx="18" ry="7" fill="#fff" stroke="#d4d4d4" />
            <path d="M14 27q12 6 22-2l-3 4q-9 5-16 1z" fill="#c4c4c4" />
            <path d="M13 7l12-6 11 3-8 6z" fill="#e9e9e9" stroke="#bdbdbd" strokeWidth=".6" />
            <path d="M13 7l20 2-1 17-19-3z" fill="#dcdcdc" stroke="#b5b5b5" strokeWidth=".6" />
            <path d="M33 9l3-5v14l-4 8z" fill="#c6c6c6" stroke="#b5b5b5" strokeWidth=".6" />
            <path d="M20 7l8-5M23 8l8-5" stroke="#b8b8b8" strokeWidth=".7" />
            <text x="13" y="17" fontSize="4" fill="#777" transform="rotate(4 13 17)">ESQUERDA</text>
            <circle cx="18" cy="34" r="2" fill="#eee" stroke="#aaa" />
            <path d="M4 19l4 1M45 25l4 1M5 21h3M45 27h3" stroke="#aaa" />
          </svg>
        </ViewCube>
        <NavBar>
          <svg width="12" height="48" viewBox="0 0 12 48">
            <circle cx="10" cy="2" r="1.200" fill="none" stroke="#aaa" strokeWidth=".7" />
            <circle cx="6" cy="11" r="4.500" fill="#e5e5e5" stroke="#a5abb0" />
            <circle cx="6" cy="11" r="2.200" fill="#fff" stroke="#a5abb0" />
            <path d="M5 20h3l-1.500 1.500zM5 40h3l-1.500 1.500z" fill="#777" />
            <path d="M0 24h12" stroke="#ddd" />
            <path d="M2 28h6v5H2z" fill="#9cc48e" />
            <circle cx="7.500" cy="33" r="1.800" fill="#fff" stroke="#888" strokeWidth=".7" />
            <path d="M9 34.500l1.500 1.500" stroke="#888" />
            <circle cx="10" cy="46" r="1.200" fill="none" stroke="#aaa" strokeWidth=".7" />
          </svg>
        </NavBar>
      </Canvas>
      <ScrollTrack>
        <ChevronUp size={5} strokeWidth={4} />
        <Thumb $width={7} $height={7} />
        <ChevronDown size={5} strokeWidth={4} />
      </ScrollTrack>
    </CanvasRow>
    <ViewBar>
      <Scale>1 : 96</Scale>
      <ViewIcons>
        {viewIconColors.map((colors, i) => (
          <BarIcon key={i} colors={colors} i={i} />
        ))}
        <ChevronLeft size={6} strokeWidth={4} />
      </ViewIcons>
      <Spacer />
      <Thumb $width={8} $height={7} />
      <Spacer />
      <ChevronRight size={6} strokeWidth={4} />
    </ViewBar>
  </View>
);

const Bcf = () => (
  <BcfPanel>
    <BcfTitle>BIMcollab BCF Manager</BcfTitle>
    <BcfTools>
      <svg width="50" height="10" viewBox="0 0 50 10">
        <path d="M1 1h4v7H1z" fill="#fff" stroke="#777faa" />
        <path d="M8 8h6l-1-3H9zM11 1v4M9 3l2-2 2 2" fill="none" stroke="#7f86b0" />
        <path d="M15 4h4l-2 2zM40 4h4l-2 2z" fill="#333" />
        <path d="M22 2h5v6h-5zM23 4h3" fill="#eee" stroke="#bbb" />
        <path d="M31 0v10" stroke="#ddd" />
        <path d="M34 2h2v2M36 3l3 4M38 6h2v2h-2z" fill="none" stroke="#6c6cc8" />
        <path d="M46 7l3-5v5z" fill="#7090d0" />
      </svg>
    </BcfTools>
    <BcfTabs>
      <span>Rheingantz</span>
      <span>Active</span>
    </BcfTabs>
    <IssueList>
      <Issue>
        <svg width="29" height="16" viewBox="0 0 29 16">
          <rect width="29" height="16" fill="#7fb0dd" />
          <rect width="29" height="6" fill="#3d78b8" />
          <path d="M5 2l15 0 3 7-13 5-2-1z" fill="#5b6468" />
          <path d="M7 3l11 0 2 5-10 1z" fill="#1fc9c9" />
          <path d="M10 4h6v3h-6z" fill="#5a7f9c" />
          <path d="M11 13l10-4" stroke="#555" />
        </svg>
        1. Corre...
      </Issue>
    </IssueList>
    <SnapTools>
      <ZoomIn size={7} color="#7b7bb4" />
      <svg width="17" height="8" viewBox="0 0 17 8">
        <path d="M1 7h6V5H5V1H3v4H1z" fill="#a4a4ea" />
        <path d="M10 1h6v6h-6z" fill="none" stroke="#7d7dae" />
        <path d="M9 0h2v2H9zM15 0h2v2h-2zM9 6h2v2H9zM15 6h2v2h-2z" fill="#6464a4" />
      </svg>
      <Search size={7} color="#999" />
    </SnapTools>
    <Preview>
      <svg width="60" height="60" viewBox="0 0 60 60">
        <defs>
          <linearGradient id="sky" x1="0" y1="0" x2="0" y2="1">
            <stop offset="0" stopColor="#2e6fb3" />
            <stop offset="1" stopColor="#e8f1f8" />
          </linearGradient>
        </defs>
        <rect width="60" height="60" fill="url(#sky)" />
        <path d="M19 2l6 1 35 2v42l-33 8-4-20-8-18z" fill="#777" />
        <path d="M19 2l6 1 5 28-6 3-9-18 4-2z" fill="#555" />
        <path d="M26 4l34 3v22l-31 3z" fill="#0ff" />
        <path d="M34 13l26 1v13l-24 0z" fill="#727b86" />
        <path d="M36 15h4v10h-4zM44 15h4v10h-4z" fill="#a6b0d0" stroke="#4646a0" />
        <path d="M24 30l36-4M25 34l35-5M17 14l12 6M15 18l12 9" stroke="#3e3e3e" />
        <path d="M31 43l8-2 1 7-9 2zM44 40l8-1v7l-8 1z" fill="#fff" />
        <path d="M28 55l32-9" stroke="#444" strokeWidth="1.500" />
      </svg>
    </Preview>
  </BcfPanel>
);

const Status = () => (
  <StatusBar>
    <StatusText>, TAB para alternativas, CTRL adiciona, SHIFT cancela a seleção.</StatusText>
    <svg width="10" height="9" viewBox="0 0 10 9">
      <path d="M1 3h5v5H1z" fill="#62a6d8" stroke="#3a78a8" />
      <path d="M7 8V1M5 3l2-2 2 2" fill="none" stroke="#4f9a4a" strokeWidth="1.300" />
    </svg>
    <SelectWrap $width={93}>
      <select aria-label="Conjunto de trabalho">
        <option></option>
      </select>
      <ChevronDown size={4} />
    </SelectWrap>
    <svg width="33" height="9" viewBox="0 0 33 9">
      <path d="M1 8V1h5M1 4h3" fill="none" stroke="#999" strokeWidth="1.300" />
      <circle cx="12" cy="6" r="1.500" fill="#777" />
      <path d="M17 1h6v6h-6zM17 3h6M19 5h3" fill="#fff" stroke="#5f6e7d" />
      <path d="M26 2h6v5h-6z" fill="#8b8b8b" />
    </svg>
    <SelectWrap $width={94}>
      <select aria-label="Opções de projeto" defaultValue="main">
        <option value="main">Modelo principal</option>
      </select>
      <ChevronDown size={4} />
    </SelectWrap>
    <Spacer />
    <svg width="41" height="9" viewBox="0 0 41 9">
      <path d="M1 1h7L5 5v3H4V5z" fill="#e3b23a" stroke="#9f7b2a" strokeWidth=".6" />
      <path d="M11 7l3-5h4v3l-3 3z" fill="#cfe4f5" stroke="#3f7fae" />
      <path d="M16 1h2v4h-2zM35 1h2v4h-2z" fill="#c8463a" />
      <path d="M21 2l3-1 3 5-4 1z" fill="#e39a4a" stroke="#a0603a" />
      <path d="M31 2h4v5h-4z" fill="#7dbbe9" stroke="#3f7fae" />
      <path d="M38 1h3v3z" fill="#444" />
    </svg>
  </StatusBar>
);

const App = () => (
  <>
    <GlobalStyle />
    <Shell>
      <TitleBar>
        <TitleTools>
          <ToolButton $width={5}><Arrow /></ToolButton>
          <ToolButton $color="#a0a0a0"><Undo2 size={9} /></ToolButton>
          <ToolButton $width={5}><Arrow color="#999" /></ToolButton>
          <ToolButton $color="#a0a0a0"><Redo2 size={9} /></ToolButton>
          <ToolButton $width={5}><Arrow color="#999" /></ToolButton>
          <ToolButton><Printer size={9} /></ToolButton>
          <ToolButton $color="#888"><Ruler size={8} /></ToolButton>
          <ToolButton $width={5}><Arrow /></ToolButton>
          <ToolButton><PenLine size={8} /></ToolButton>
          <ToolButton $color="#777"><Tag size={8} /></ToolButton>
          <ToolButton><Letter>A</Letter></ToolButton>
          <ToolButton $color="#4c5a68"><Box size={9} /></ToolButton>
          <ToolButton $width={5}><Arrow /></ToolButton>
          <ToolButton $color="#777"><Diamond size={7} /></ToolButton>
          <ToolButton $color="#396a98"><AlignLeft size={9} strokeWidth={3} /></ToolButton>
          <ToolButton $color="#b0524c"><Grid2x2X size={9} /></ToolButton>
          <ToolButton><PanelsTopLeft size={9} /></ToolButton>
          <ToolButton $width={5}><Arrow /></ToolButton>
          <ToolButton $width={5}><Arrow /></ToolButton>
        </TitleTools>
        <Title>Autodesk Revit 2022 - Av Rheingantz 200_BG_RV01.rvt - Vista 3D: A_ARCHITECTURAL 3D (KEEP)</Title>
        <TitleTools>
          <ToolButton $width={5}><ChevronLeft size={5} strokeWidth={5} /></ToolButton>
          <ToolButton><Binoculars size={8} strokeWidth={3} /></ToolButton>
          <ToolButton>
            <svg width="8" height="9" viewBox="0 0 8 9">
              <path d="M2 1h4v4L8 7v2H0V7l2-2z" fill="#3a62b4" />
            </svg>
          </ToolButton>
          <span>raphael_rca</span>
          <ToolButton $width={20}><Arrow /></ToolButton>
          <ToolButton $color="#4a5a8c"><ShoppingCart size={8} strokeWidth={3} /></ToolButton>
          <ToolButton $width={18} $color="#38649c"><CircleHelp size={9} strokeWidth={3} /></ToolButton>
          <ToolButton $width={5}><Arrow /></ToolButton>
        </TitleTools>
      </TitleBar>
      <Tabs>
        <RibbonTab $active>ura</RibbonTab>
        {ribbonTabs.map(tab => (
          <RibbonTab key={tab}>{tab}</RibbonTab>
        ))}
      </Tabs>
      <RibbonArea />
      <RibbonFoot />
      <Workspace>
        <Properties />
        <ModelView />
        <Bcf />
      </Workspace>
      <Status />
      <Tray>
        <span />
        <span />
      </Tray>
      <HostBar>
        <span>5.???</span>
        <span>GND REF SYS COORDS</span>
        <span>XX DEG XX</span>
      </HostBar>
    </Shell>
  </>
);

export default App;
